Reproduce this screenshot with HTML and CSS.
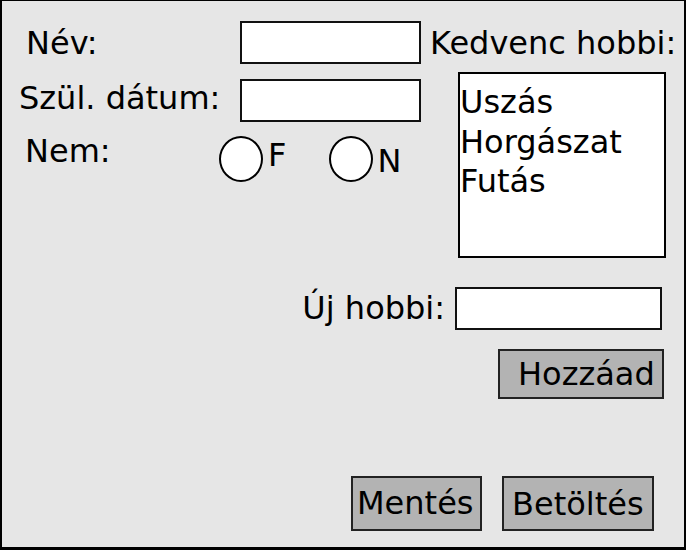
FILE: index.html
```html
<!DOCTYPE html>
<html lang="hu">
<head>
    <meta charset="UTF-8">
    <meta name="viewport" content="width=device-width, initial-scale=1.0">
    <title>Hobbi</title>
    <link rel="stylesheet" href="styles.css">
</head>
<body>
<div class="window">
    <div class="top">
        <div class="fields">
            <!-- név -->
            <div class="row row-name">
                <label class="lbl" for="nevInput">Név:</label>
                <input class="text" id="nevInput" name="nev"/>
            </div>
            <!-- születési dátum -->
            <div class="row row-birth">
                <label class="lbl" for="datumInput">Szül. dátum:</label>
                <input class="text" id="datumInput" name="datum"/>
            </div>
            <!-- nem -->
            <div class="row row-gender">
                <span class="lbl">Nem:</span>
                <label class="radio radio-f"><input type="radio" name="nem" value="F"/><span>F</span></label>
                <label class="radio radio-n"><input type="radio" name="nem" value="N"/><span>N</span></label>
            </div>
        </div>
        <div class="hobbies">
            <div class="lbl">Kedvenc hobbi:</div>
            <ul class="list">
                <li>Uszás</li>
                <li>Horgászat</li>
                <li>Futás</li>
            </ul>
        </div>
    </div>
    <div class="new-hobby">
        <label class="lbl" for="hobbiInput">Új hobbi:</label>
        <input class="text text-wide" id="hobbiInput" name="hobbi"/>
    </div>
    <div class="add-row">
        <button class="btn btn-add">Hozzáad</button>
    </div>
    <div class="actions">
        <button class="btn btn-save">Mentés</button>
        <button class="btn btn-load">Betöltés</button>
    </div>
</div>
</body>
</html>
```

FILE: styles.css
```css
body{
    margin: 0;
}

.window{
    width: 686px;
    height: 550px;
    box-sizing: border-box;
    border-style: solid;
    border-color: #000;
    border-width: 1px 2px 3px 2px;
    background-color: #e6e6e6;
    font-family: "DejaVu Sans", sans-serif;
    font-size: 32px;
    line-height: 32px;
    color: #000;
}

.top{
    display: flex;
}
.fields{
    width: 419px;
    padding-top: 20px;
}
.row{
    display: flex;
    align-items: flex-start;
}
.lbl{
    white-space: nowrap;
}

.text{
    box-sizing: border-box;
    width: 181px;
    height: 43px;
    padding: 0;
    margin: 0;
    border: 2px solid #111;
    background-color: #fff;
    font: inherit;
}
.text-wide{
    width: 207px;
}

.row-name .lbl{
    margin: 6px 0 0 24px;
}
.row-name .text,
.row-birth .text{
    margin-left: auto;
}
.row-birth{
    margin-top: 15px;
}
.row-birth .lbl{
    margin: 3px 0 0 17px;
}
.row-gender{
    margin-top: 14px;
}
.row-gender .lbl{
    width: 194px;
    margin: -1px 0 0 23px;
}

.radio{
    display: flex;
    align-items: flex-start;
}
.radio input{
    appearance: none;
    -webkit-appearance: none;
    box-sizing: border-box;
    width: 44px;
    height: 46px;
    margin: 0;
    border: 2px solid #000;
    border-radius: 50%;
    background-color: #fff;
}
.radio span{
    margin-left: 5px;
}
.radio-f span{
    margin-top: 3px;
}
.radio-n{
    margin-left: 43px;
}
.radio-n span{
    margin-left: 4px;
    margin-top: 9px;
}

.hobbies{
    flex: 1;
    padding-left: 9px;
}
.hobbies .lbl{
    margin-top: 26px;
}
.list{
    box-sizing: border-box;
    width: 208px;
    height: 186px;
    margin: 13px 0 0 28px;
    padding: 9px 0 0 0;
    list-style: none;
    border: 2px solid #000;
    background-color: #fff;
    line-height: 39.5px;
}

.new-hobby{
    display: flex;
    justify-content: flex-end;
    align-items: flex-start;
    margin-top: 29px;
    padding-right: 22px;
}
.new-hobby .lbl{
    margin: 5px 10px 0 0;
}

.btn{
    box-sizing: border-box;
    margin: 0;
    padding: 0;
    border: 2px solid #222;
    background-color: #b3b3b3;
    font: inherit;
    color: #000;
    text-align: left;
}
.add-row{
    display: flex;
    justify-content: flex-end;
    margin-top: 19px;
    padding-right: 20px;
}
.btn-add{
    width: 166px;
    height: 50px;
    padding-left: 18px;
}
.actions{
    display: flex;
    justify-content: flex-end;
    gap: 20px;
    margin-top: 77px;
    padding-right: 30px;
}
.btn-save{
    width: 131px;
    height: 55px;
    padding-left: 4px;
    padding-bottom: 1px;
}
.btn-load{
    width: 152px;
    height: 55px;
    padding-left: 8px;
}
```
